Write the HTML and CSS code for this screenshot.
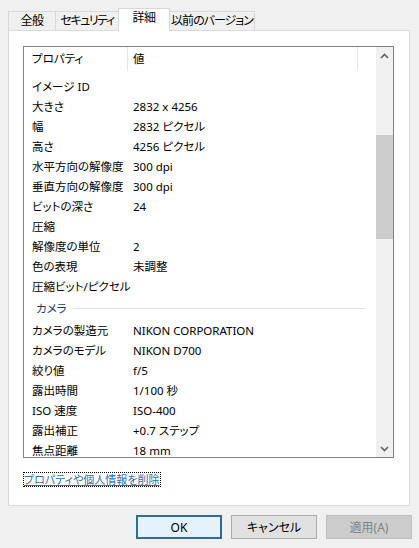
FILE: index.html
```html
<!DOCTYPE html>
<html lang="ja">
<head>
  <meta charset="UTF-8">
  <title>プロパティ - 詳細</title>
  <link rel="stylesheet" href="styles.css">
</head>
<body>
  <div class="dialog">
    <div class="tabs">
      <div class="tab t-general">全般</div>
      <div class="tab t-security">セキュリティ</div>
      <div class="tab t-details active">詳細</div>
      <div class="tab t-prev">以前のバージョン</div>
    </div>

    <div class="panel">
      <div class="list">
        <div class="list-body">
          <div class="head">
            <div class="k">プロパティ</div>
            <div class="v">値</div>
          </div>
          <div class="rows">
            <div class="row"><div class="k">イメージ ID</div><div class="v"></div></div>
            <div class="row"><div class="k">大きさ</div><div class="v">2832 x 4256</div></div>
            <div class="row"><div class="k">幅</div><div class="v">2832 ピクセル</div></div>
            <div class="row"><div class="k">高さ</div><div class="v">4256 ピクセル</div></div>
            <div class="row"><div class="k">水平方向の解像度</div><div class="v">300 dpi</div></div>
            <div class="row"><div class="k">垂直方向の解像度</div><div class="v">300 dpi</div></div>
            <div class="row"><div class="k">ビットの深さ</div><div class="v">24</div></div>
            <div class="row"><div class="k">圧縮</div><div class="v"></div></div>
            <div class="row"><div class="k">解像度の単位</div><div class="v">2</div></div>
            <div class="row"><div class="k">色の表現</div><div class="v">未調整</div></div>
            <div class="row"><div class="k">圧縮ビット/ピクセル</div><div class="v"></div></div>
            <div class="group"><span>カメラ</span><div class="rule"></div></div>
            <div class="row"><div class="k">カメラの製造元</div><div class="v">NIKON CORPORATION</div></div>
            <div class="row"><div class="k">カメラのモデル</div><div class="v">NIKON D700</div></div>
            <div class="row"><div class="k">絞り値</div><div class="v">f/5</div></div>
            <div class="row"><div class="k">露出時間</div><div class="v">1/100 秒</div></div>
            <div class="row"><div class="k">ISO 速度</div><div class="v">ISO-400</div></div>
            <div class="row"><div class="k">露出補正</div><div class="v">+0.7 ステップ</div></div>
            <div class="row"><div class="k">焦点距離</div><div class="v">18 mm</div></div>
          </div>
        </div>
        <div class="scrollbar">
          <div class="sb-btn">
            <svg width="9" height="6" viewBox="0 0 9 6"><polyline points="1,5 4.5,1.5 8,5" fill="none" stroke="#606060" stroke-width="1.6"/></svg>
          </div>
          <div class="sb-track"><div class="sb-thumb"></div></div>
          <div class="sb-btn">
            <svg width="9" height="6" viewBox="0 0 9 6"><polyline points="1,1 4.5,4.5 8,1" fill="none" stroke="#606060" stroke-width="1.6"/></svg>
          </div>
        </div>
      </div>

      <a href="#" class="link">プロパティや個人情報を削除</a>
    </div>

    <div class="buttons">
      <button class="btn default">OK</button>
      <button class="btn">キャンセル</button>
      <button class="btn" disabled>適用(A)</button>
    </div>
  </div>
</body>
</html>
```

FILE: styles.css
```css
body { margin: 0; width: 419px; height: 548px; overflow: hidden; background: #f0f0f0; color: #000; font-family: "Noto Sans", "Noto Sans CJK JP", sans-serif; font-size: 11.5px; font-feature-settings: "palt"; }
.dialog { padding: 8px 0 0 8px; }

/* tabs */
.tabs { display: flex; align-items: flex-start; height: 23px; }
.tab { box-sizing: border-box; height: 19px; margin-top: 3px; border: 1px solid #d9d9d9; border-bottom: none; background: #f0f0f0; text-align: center; line-height: 18px; white-space: nowrap; font-size: 12px; letter-spacing: -0.5px; }
.tab + .tab { margin-left: -1px; }
.tab.active { position: relative; z-index: 1; height: 23px; margin-top: 0; background: #fff; }
.t-general { width: 48px; }
.t-security { width: 64px; letter-spacing: -1.5px; }
.t-details { width: 52px; }
.t-prev { width: 86px; letter-spacing: -1px; }

.panel { box-sizing: border-box; width: 402px; height: 476px; margin-top: -1px; padding: 15px 0 0 14px; background: #fff; border: 1px solid #d9d9d9; }

/* property list */
.list { box-sizing: border-box; display: flex; width: 371px; height: 412px; border: 1px solid #828282; }
.list-body { flex: 1; overflow: hidden; }
.head { display: flex; height: 24px; line-height: 24px; }
.head .k, .head .v { border-right: 1px solid #e5e5e5; }
.k { box-sizing: border-box; width: 104px; padding-left: 8px; white-space: nowrap; }
.v { box-sizing: border-box; padding-left: 5px; white-space: nowrap; }
.head .v { width: 230px; }
.rows { padding-top: 6px; }
.row { display: flex; height: 20px; line-height: 20px; }
.group { display: flex; align-items: center; height: 24px; padding: 0 10px 2px 12px; box-sizing: border-box; color: #1e3c78; }
.group .rule { flex: 1; height: 1px; margin-left: 6px; background: #e3e3e3; }

.scrollbar { display: flex; flex-direction: column; width: 17px; background: #f0f0f0; }
.sb-btn { display: flex; align-items: center; justify-content: center; height: 17px; }
.sb-track { flex: 1; }
.sb-thumb { height: 104px; margin-top: 71px; background: #cdcdcd; }

.link { display: inline-block; margin-top: 14px; color: #2e6fae; text-decoration: underline; border: 1px dotted #000; line-height: 13px; font-size: 11px; }

/* buttons */
.buttons { display: flex; justify-content: flex-end; gap: 9px; margin-top: 9px; padding-right: 7px; }
.btn { box-sizing: border-box; width: 86px; height: 24px; padding: 0; font: inherit; font-size: 12px; color: #000; background: #e1e1e1; border: 1px solid #adadad; }
.btn.default { background: #e5f1fb; border: 2px solid #2f6c9e; }
.btn:disabled { color: #838383; background: #cccccc; border-color: #bfbfbf; }
```
